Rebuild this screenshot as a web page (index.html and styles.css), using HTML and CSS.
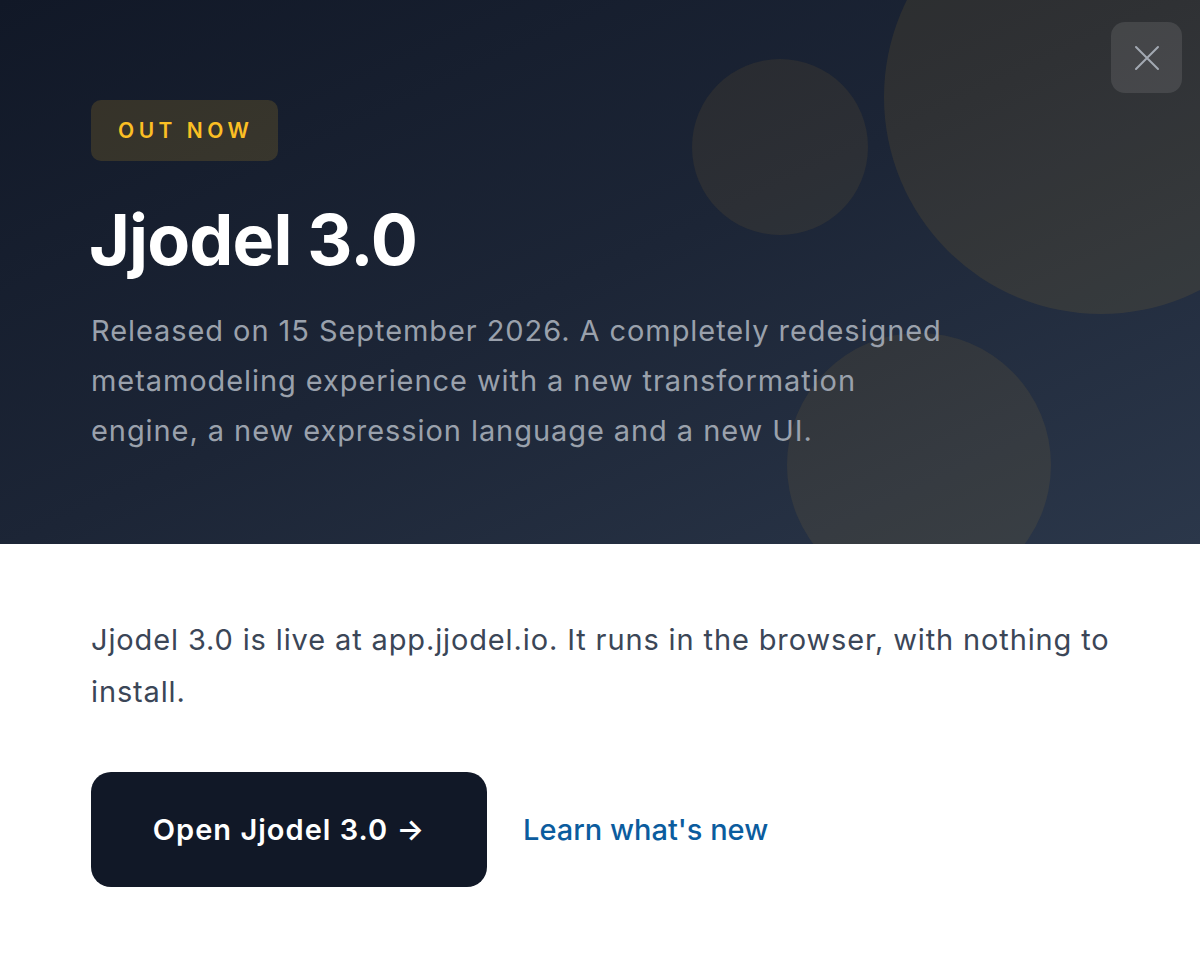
FILE: index.html
```html
<!DOCTYPE html>
<html lang="en">
<head>
<meta charset="UTF-8">
<meta name="viewport" content="width=device-width, initial-scale=1.0">
<title>Jjodel 3.0</title>
<link rel="stylesheet" href="styles.css">
</head>

<body>
<div class="release">
    <header class="hero">
        <span class="blob blob-big"></span>
        <span class="blob blob-mid"></span>
        <span class="blob blob-low"></span>

        <button class="close-btn" aria-label="Close">
            <svg width="26" height="26" viewBox="0 0 26 26" fill="none" stroke="currentColor" stroke-width="2" stroke-linecap="round">
                <path d="M2 2L24 24M24 2L2 24"/>
            </svg>
        </button>

        <span class="badge">OUT NOW</span>
        <h1 class="title">Jjodel 3.0</h1>
        <p class="lead">Released on 15 September 2026. A completely redesigned metamodeling experience with a new transformation engine, a new expression language and a new UI.</p>
    </header>

    <section class="content">
        <p class="info">Jjodel 3.0 is live at app.jjodel.io. It runs in the browser, with nothing to install.</p>
        <div class="actions">
            <a class="btn-primary" href="#">Open Jjodel 3.0 &rarr;</a>
            <a class="link" href="#">Learn what's new</a>
        </div>
    </section>
</div>
</body>
</html>
```

FILE: styles.css
```css
* {
    box-sizing: border-box;
}
body {
    margin: 0;
    background-color: #ffffff;
    font-family: Inter, "Noto Sans", sans-serif;
}
.release {
    width: 1200px;
}
.hero {
    position: relative;
    overflow: hidden;
    height: 544px;
    padding: 100px 88px 0 88px;
    background: linear-gradient(155deg, #111827 0%, #1c2536 50%, #2b374a 100%);
}
.blob {
    position: absolute;
    border-radius: 50%;
    background-color: rgba(251, 191, 36, 0.085);
}
.blob-big {
    left: 884px;
    top: -120px;
    width: 434px;
    height: 434px;
}
.blob-mid {
    left: 692px;
    top: 59px;
    width: 176px;
    height: 176px;
    background-color: rgba(251, 191, 36, 0.07);
}
.blob-low {
    left: 787px;
    top: 333px;
    width: 264px;
    height: 264px;
    background-color: rgba(251, 191, 36, 0.075);
}
.close-btn {
    position: absolute;
    top: 22px;
    right: 18px;
    width: 71px;
    height: 71px;
    border: none;
    border-radius: 14px;
    background-color: rgba(255, 255, 255, 0.1);
    color: #a3a9b3;
    display: flex;
    align-items: center;
    justify-content: center;
    cursor: pointer;
}
.badge {
    position: relative;
    display: inline-block;
    margin-left: 3px;
    padding: 0 24px 0 27px;
    height: 61px;
    line-height: 61px;
    border-radius: 10px;
    background-color: rgba(251, 191, 36, 0.15);
    color: #fbbf24;
    font-size: 21px;
    font-weight: 600;
    letter-spacing: 0.215em;
}
.title {
    position: relative;
    margin: 34px 0 0 1px;
    color: #ffffff;
    font-size: 70px;
    font-weight: 700;
    line-height: 90px;
    letter-spacing: -0.012em;
}
.lead {
    position: relative;
    margin: 21px 0 0 3px;
    max-width: 866px;
    color: #9aa1ac;
    font-size: 29px;
    line-height: 50px;
    letter-spacing: 0.032em;
}
.content {
    padding: 70px 88px 0 88px;
}
.info {
    margin: 0 0 0 3px;
    color: #3b4657;
    font-size: 29px;
    line-height: 52px;
    letter-spacing: 0.03em;
}
.actions {
    display: flex;
    align-items: center;
    gap: 36px;
    margin: 54px 0 0 3px;
}
.btn-primary {
    display: inline-flex;
    align-items: center;
    justify-content: center;
    width: 396px;
    height: 115px;
    border-radius: 20px;
    background-color: #111827;
    color: #ffffff;
    font-size: 29px;
    font-weight: 600;
    letter-spacing: 0.035em;
    text-decoration: none;
}
.link {
    color: #0b5c9e;
    font-size: 29px;
    font-weight: 500;
    text-decoration: none;
}
```
